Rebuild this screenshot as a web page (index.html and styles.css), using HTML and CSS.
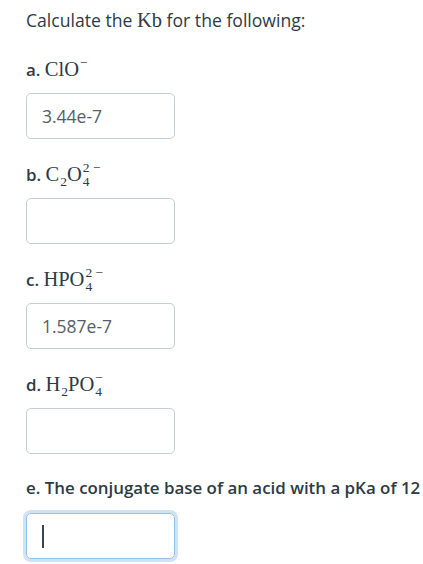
FILE: index.html
```html
<!DOCTYPE html>
<html>
<head>
<meta charset="utf-8">
<link rel="stylesheet" href="styles.css">
</head>
<body>
<div class="page">
  <p class="intro">Calculate the <span class="m">Kb</span> for the following:</p>

  <div class="item">
    <div class="label">a. <span class="m">ClO<span class="ss"><span class="sup">−</span><span class="sub">&nbsp;</span></span></span></div>
    <div class="box"><span class="val">3.44e-7</span></div>
  </div>

  <div class="item">
    <div class="label">b. <span class="m">C<span class="ss"><span class="sup">&nbsp;</span><span class="sub">2</span></span>O<span class="ss"><span class="sup">2 −</span><span class="sub">4</span></span></span></div>
    <div class="box"></div>
  </div>

  <div class="item">
    <div class="label">c. <span class="m">HPO<span class="ss"><span class="sup">2 −</span><span class="sub">4</span></span></span></div>
    <div class="box"><span class="val">1.587e-7</span></div>
  </div>

  <div class="item">
    <div class="label">d. <span class="m">H<span class="ss"><span class="sup">&nbsp;</span><span class="sub">2</span></span>PO<span class="ss"><span class="sup">−</span><span class="sub">4</span></span></span></div>
    <div class="box"></div>
  </div>

  <div class="item">
    <div class="label">e. The conjugate base of an acid with a pKa of 12</div>
    <div class="box focus"><span class="caret"></span></div>
  </div>
</div>
</body>
</html>
```

FILE: styles.css
```css
html, body {
  margin: 0;
  padding: 0;
  background: #ffffff;
}
body {
  font-family: "Open Sans", "Lato", sans-serif;
  color: #2d3b45;
  font-size: 16.9px;
}
.page {
  padding: 8px 0 0 26px;
}
.intro {
  margin: 0 0 24px 0;
  line-height: 24px;
  height: 24px;
  font-size: 17.6px;
  white-space: nowrap;
}
.m {
  font-family: "Liberation Serif", "DejaVu Serif", serif;
  font-weight: normal;
  font-size: 20.5px;
}
.item {
  margin-bottom: 22px;
}
.label {
  font-weight: 600;
  line-height: 24px;
  height: 24px;
  margin-bottom: 13px;
  white-space: nowrap;
}
.ss {
  display: inline-flex;
  flex-direction: column;
  vertical-align: 9px;
  font-size: 13.5px;
  line-height: 14px;
  margin-left: 1px;
  white-space: pre;
}
.box {
  box-sizing: border-box;
  width: 149px;
  height: 46px;
  border: 1px solid #c7cdd1;
  border-radius: 5px;
  padding: 0 15px;
  display: flex;
  align-items: center;
}
.val {
  color: #555e66;
  font-size: 17.5px;
}
.box.focus {
  border-color: #8fc1ea;
  box-shadow: 0 0 0 3px #cfe3f5;
}
.caret {
  display: block;
  width: 2px;
  height: 23px;
  background: #3a444d;
}
```
